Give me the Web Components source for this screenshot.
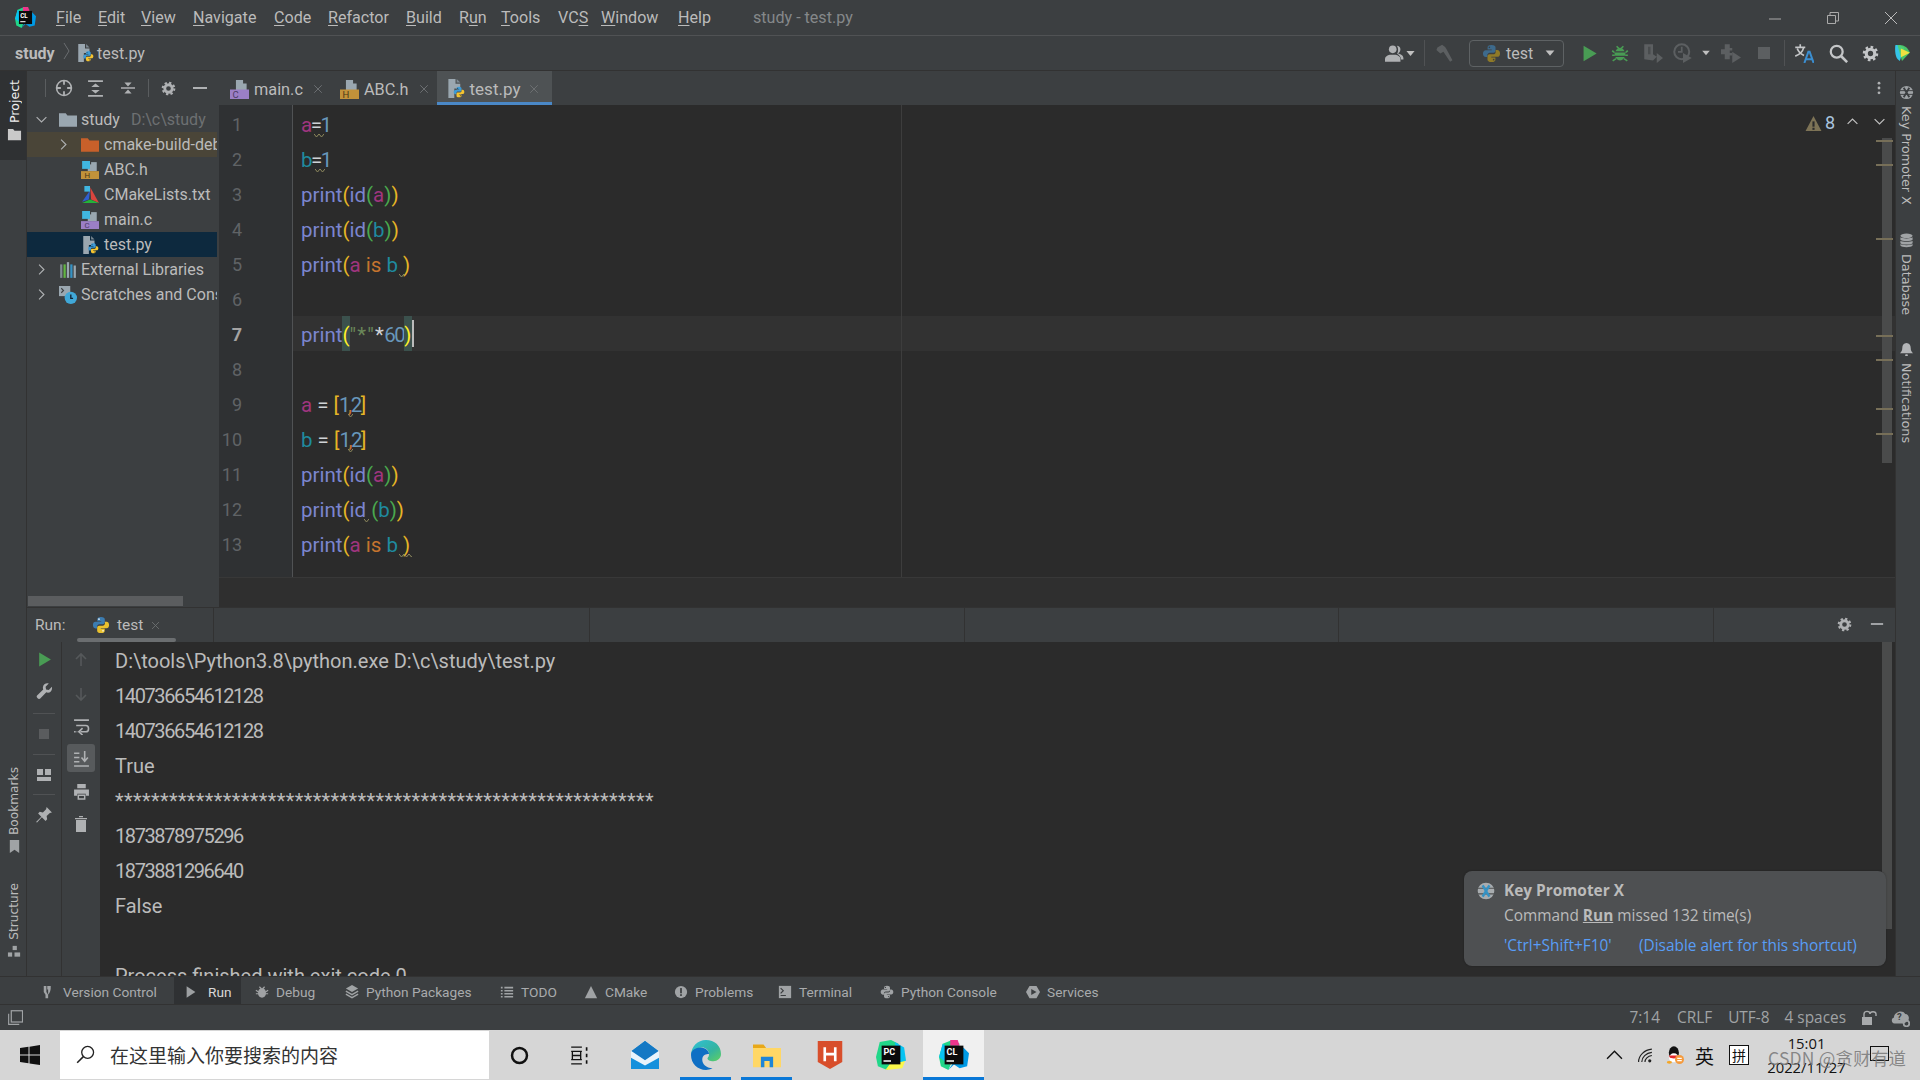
<!DOCTYPE html>
<html lang="zh-CN"><head><meta charset="utf-8"><title>study - test.py</title>
<style>
html,body{margin:0;padding:0;background:#3c3f41}
body{width:1920px;height:1080px;overflow:hidden;font-family:Roboto,"Noto Sans CJK SC",sans-serif;color:#bbb}
</style></head><body>
<ide-app></ide-app>
<script>
const PY=(b,y,e='#fff')=>`<path fill="${b}" d="M8 .8C5.4.8 4.7 1.8 4.7 3v1.6H8.2v.6H3.1C1.8 5.2.8 6.3.8 8.1s1 2.9 2.3 2.9h1.4V9.3c0-1.1.9-2 2-2h3.2c.9 0 1.7-.8 1.7-1.7V3C11.4 1.8 10.4.8 8 .8z"/><path fill="${y}" d="M8 15.2c2.6 0 3.3-1 3.3-2.2v-1.6H7.8v-.6h5.1c1.3 0 2.3-1.1 2.3-2.9s-1-2.9-2.3-2.9h-1.4v1.7c0 1.1-.9 2-2 2H6.3c-.9 0-1.7.8-1.7 1.7V13c0 1.2 1 2.2 3.4 2.2z"/><circle cx="6.2" cy="2.8" r=".7" fill="${e}"/><circle cx="9.8" cy="13.2" r=".7" fill="${e}"/>`;
const G='#afb1b3',D='#5c5f61';
const ICONS={
 python:PY('#3c7cb0','#e8c02e'),
 pydim:PY('#3d6a8c','#8f7a28','#3c3f41'),
 pyfile:`<path fill="#9aa7b0" d="M2 0h6v4h4v4H7v8H2z"/><path fill="#7d8a93" d="M9 0l3 3H9z"/><g transform="translate(6 6) scale(.62)">${PY('#3d9bd6','#f4c430','#222')}</g>`,
 cfile:`<path fill="#9aa7b0" d="M5 0h6v3h3v6H5z"/><rect x="0" y="8" width="16" height="8" fill="#9b7fc6"/><text x="2" y="15" font-size="8" font-family="Roboto" fill="#4b3b66">C</text>`,
 hfile:`<path fill="#9aa7b0" d="M5 0h6v3h3v6H5z"/><rect x="0" y="8" width="16" height="8" fill="#c2923a"/><text x="2" y="15" font-size="8" font-family="Roboto" fill="#4a3716">H</text>`,
 cfileb:`<path fill="#9aa7b0" d="M6 3h5v6H6z"/><path fill="#9aa7b0" d="M9 1h5v8H9z"/><rect x="1" y="0" width="7" height="7" fill="#40b6e0"/><rect x="0" y="9" width="16" height="7" fill="#9b7fc6"/><text x="3" y="15.4" font-size="7" font-family="Roboto" fill="#4b3b66">C</text>`,
 hfileb:`<path fill="#9aa7b0" d="M6 3h5v6H6z"/><path fill="#9aa7b0" d="M9 1h5v8H9z"/><rect x="1" y="0" width="7" height="7" fill="#40b6e0"/><rect x="0" y="9" width="16" height="7" fill="#c2923a"/><text x="3" y="15.4" font-size="7" font-family="Roboto" fill="#4a3716">H</text>`,
 folder:`<path fill="#9aa7b0" d="M0 2h6l1.5 2H16v10H0z"/>`,
 folderw:`<path fill="#c9c9c9" d="M1 2h5.5L8 4h7v10H1z"/>`,
 foldero:`<path fill="#c8602a" d="M0 2h6l1.5 2H16v10H0z"/>`,
 cmake:`<path fill="#2f5fd0" d="M8 4L1 14l6-2z"/><path fill="#d9453e" d="M8.2 1L16 15l-7-3z"/><path fill="#23b33a" d="M1 15h15l-8-3z"/><path fill="#40b6e0" d="M3 0h5v5H3z"/>`,
 libs:`<g fill="#7f8b91"><rect x="1" y="3" width="2" height="12"/></g><rect x="4" y="3" width="2" height="12" fill="#62b543"/><rect x="7" y="1" width="2" height="14" fill="#9aa7b0"/><rect x="10" y="3" width="2" height="12" fill="#3592c4"/><rect x="13" y="4" width="2" height="11" fill="#9aa7b0"/>`,
 scratch:`<path fill="#9aa7b0" d="M0 0h10v9H0z"/><path d="M2 2l2 2-2 2" fill="none" stroke="#3c3f41"/><circle cx="10.5" cy="10.5" r="5.5" fill="#40a8d8"/><path d="M10.5 7.5v3.5h2" fill="none" stroke="#123" stroke-width="1.2"/>`,
 locate:`<circle cx="8" cy="8" r="6.6" fill="none" stroke="${G}" stroke-width="1.4"/><path d="M8 1v4.2M8 10.8V15M1 8h4.2M10.8 8H15" stroke="${G}" stroke-width="1.6"/>`,
 expand:`<path d="M1 1h14M1 15h14" stroke="${G}" stroke-width="1.6"/><path fill="${G}" d="M8 3.4l4 3.2H4zM8 12.6L4 9.4h8z"/>`,
 collapse:`<path d="M1 8h14" stroke="${G}" stroke-width="1.5"/><path fill="${G}" d="M8 6.4L4.4 2.4h7.2zM8 9.6l3.6 4H4.4z"/>`,
 gear:`<circle cx="8" cy="8" r="4" fill="none" stroke="${G}" stroke-width="3"/><circle cx="8" cy="8" r="6.2" fill="none" stroke="${G}" stroke-width="2.2" stroke-dasharray="2.45 2.4"/>`,
 minus:`<rect x="1" y="7" width="14" height="2" fill="${G}"/>`,
 close:`<path d="M3 3l10 10M13 3L3 13" stroke="#6d7072" stroke-width="1.3"/>`,
 right:`<path d="M5 2l6 6-6 6" fill="none" stroke="${G}" stroke-width="1.4"/>`,
 down:`<path d="M2 5l6 6 6-6" fill="none" stroke="${G}" stroke-width="1.4"/>`,
 up:`<path d="M2 11l6-6 6 6" fill="none" stroke="#c0c0c0" stroke-width="1.5"/>`,
 downb:`<path d="M2 5l6 6 6-6" fill="none" stroke="#c0c0c0" stroke-width="1.5"/>`,
 dots:`<circle cx="8" cy="2.5" r="1.6" fill="${G}"/><circle cx="8" cy="8" r="1.6" fill="${G}"/><circle cx="8" cy="13.5" r="1.6" fill="${G}"/>`,
 warn:`<path fill="#7d7356" d="M8 1l7.5 14H.5z"/><rect x="7" y="6" width="2" height="5" fill="#2b2b2b"/><rect x="7" y="12" width="2" height="2" fill="#2b2b2b"/>`,
 person:`<circle cx="6.5" cy="4.5" r="3.2" fill="${G}"/><path fill="${G}" d="M0 15v-2.5c0-2 2-3 4-3.5h5c2 .5 4 1.5 4 3.5V15z"/><path fill="${G}" d="M10 1.5c1.6 0 3 1.2 3 3s-1 3-2 3.4c2 .5 4.5 1.4 4.5 4V13h-2c0-2-1.5-3.8-3.3-4.8C11.2 7 11.5 3.5 10 1.5z"/>`,
 hammer:`<path fill="${D}" d="M2 3l4-2.4 2.5 2 1 1.5 5.2 9.6-2 1.3-5.6-8.5L4.5 8 1.2 5z"/>`,
 play:`<path fill="#499c54" d="M3 1.5v13l11-6.5z"/>`,
 playw:`<path fill="#9da0a2" d="M3 1.5v13l10-6.5z"/>`,
 bug:`<ellipse cx="8" cy="9" rx="4.6" ry="5.6" fill="#499c54"/><path d="M5 2l2 2M11 2L9 4M1 6l3 2M15 6l-3 2M1 10h3M15 10h-3M1.5 15l3-2M14.5 15l-3-2" stroke="#499c54" stroke-width="1.5"/><path d="M3 7h10M3 11h10" stroke="#3c3f41" stroke-width="1"/>`,
 bugg:`<ellipse cx="8" cy="9" rx="4.6" ry="5.6" fill="#a0a2a4"/><path d="M5 2l2 2M11 2L9 4M1 6l3 2M15 6l-3 2M1 10h3M15 10h-3" stroke="#a0a2a4" stroke-width="1.4"/>`,
 cover:`<path fill="${D}" d="M1 1h7v8l3 2-3 3-7-1zM11 8v8l5-4z"/><path fill="#3c3f41" d="M4 3h2v6H4z" opacity=".6"/>`,
 profile:`<circle cx="7" cy="7" r="6" fill="none" stroke="${D}" stroke-width="1.6"/><path d="M7 3v4H4" stroke="${D}" fill="none" stroke-width="1.4"/><path fill="${D}" d="M8 8v8l7-4z"/>`,
 attach:`<path fill="${D}" d="M3 1h4v3h2v2H7v2h2v2H7v3H3v-4H0V5h3z"/><path fill="${D}" d="M9 7v9l7-4.5z"/>`,
 stop:`<rect x="2" y="2" width="12" height="12" fill="${D}"/>`,
 stopd:`<rect x="3" y="3" width="10" height="10" fill="#5a5c5e"/>`,
 caret:`<path fill="#c0c0c0" d="M3 5h10l-5 6z"/>`,
 translate:`<path d="M1 3.5h8M5 1v2.5M7.8 3.5C7 7 4 9.5 1 10.5M2.6 4.5C3.6 7 6 9 8 10" fill="none" stroke="#c4c6c8" stroke-width="1.3"/><path d="M8.3 16l3.2-9h1l3.2 9M9.6 13h5" fill="none" stroke="#3b8ed0" stroke-width="1.6"/>`,
 search:`<circle cx="6.5" cy="6.5" r="5" fill="none" stroke="#c4c6c8" stroke-width="1.9"/><path d="M10.3 10.3l5 5" stroke="#c4c6c8" stroke-width="2.2"/>`,
 gearl:`<circle cx="8" cy="8" r="4" fill="none" stroke="#c4c6c8" stroke-width="3"/><circle cx="8" cy="8" r="6.2" fill="none" stroke="#c4c6c8" stroke-width="2.2" stroke-dasharray="2.45 2.4"/>`,
 code:`<path fill="#35c4e8" d="M2 1c3-.6 6 .5 8 2.5L6 15C3 13 1.4 10 2 1z"/><path fill="#4dd06c" d="M4 1c5-1 9 1.5 11 6.6L8 15z" opacity=".9"/><path fill="#f0e040" d="M7 4l8 3.8-8 4z"/>`,
 keyx:`<circle cx="8" cy="8" r="7" fill="#9ea2a5"/><path d="M1 6h14M1 10h14" stroke="#3c3f41" stroke-width="1"/><path d="M5 3l6 10M11 3L5 13" stroke="#3c3f41" stroke-width="2"/>`,
 keyxb:`<circle cx="8" cy="8" r="7.4" fill="#a8acaf"/><path d="M0 5.5h16M0 10.5h16" stroke="#4e5052" stroke-width="1"/><path d="M5 3l6 10M11 3L5 13" stroke="#3592c4" stroke-width="2.2"/>`,
 db:`<g fill="#a0a3a5"><ellipse cx="8" cy="3" rx="6.5" ry="2.4"/><path d="M1.5 4.6c1 1.6 12 1.6 13 0v2.6c-1 1.8-12 1.8-13 0zM1.5 8.2c1 1.6 12 1.6 13 0v2.6c-1 1.8-12 1.8-13 0zM1.5 11.8c1 1.6 12 1.6 13 0V13.4c-1 2.4-12 2.4-13 0z"/></g>`,
 bell:`<path fill="#b3b5b7" d="M8 1c3 0 4.5 2.4 4.5 5.5 0 3 1 4 2.5 5.5H1c1.5-1.5 2.5-2.5 2.5-5.5C3.5 3.4 5 1 8 1z"/><rect x="6.5" y="13" width="3" height="2" rx="1" fill="#b3b5b7"/>`,
 book:`<path fill="#a0a3a5" d="M3 1h10v14l-5-3.5L3 15z"/>`,
 struct:`<rect x="6" y="2" width="4.5" height="4.5" fill="#a0a3a5"/><rect x="1" y="9" width="4.5" height="4.5" fill="#a0a3a5"/><rect x="8" y="9" width="6" height="4.5" fill="#a0a3a5"/>`,
 wrench:`<path fill="#afb1b3" d="M15 3.5l-3 3-2.5-.5L9 3.5l3-3C9.5-.2 6.8 1.2 6.5 4c-.1.7 0 1.4.3 2L1 11.8c-1.4 1.5 1.4 4.2 3 2.8l5.7-5.8c3 1.2 6-1.4 5.3-5.3z"/>`,
 arrowu:`<path d="M8 2v12M3 7l5-5 5 5" fill="none" stroke="#55585a" stroke-width="1.6"/>`,
 arrowd:`<path d="M8 2v12M3 9l5 5 5-5" fill="none" stroke="#55585a" stroke-width="1.6"/>`,
 wrap:`<path d="M1 2h14M3 7h9c3.5 0 3.5 6 0 6H7" fill="none" stroke="#afb1b3" stroke-width="1.5"/><path d="M9 9.5L5.5 13 9 16" fill="none" stroke="#afb1b3" stroke-width="1.5"/><path d="M1 13h3" stroke="#afb1b3" stroke-width="1.5" stroke-dasharray="1.5 1"/>`,
 scroll:`<path d="M1 15h14M1 3h5M1 7h5M1 11h5" stroke="#afb1b3" stroke-width="1.5"/><path d="M11 1v9M8 7l3 3.5L14 7" fill="none" stroke="#afb1b3" stroke-width="1.5"/>`,
 print:`<path fill="#afb1b3" d="M4 1h8v4H4zM1 6h14v6h-3v-2H4v2H1z"/><path d="M5 11.5h6V15H5z" fill="none" stroke="#afb1b3" stroke-width="1.4"/>`,
 trash:`<path fill="#afb1b3" d="M3 4h10v12H3zM2 2h12v1.3H2zM6 0h4v1.3H6z"/>`,
 layout:`<path fill="#afb1b3" d="M1 2h6v6H1zM9 2h6v6H9zM1 10h14v4H1z"/>`,
 pin:`<path fill="#afb1b3" d="M10 1l5 5-2 .5-3 3 .5 3L9 14 5.5 10.5 1 15.5 0 15l5-5L2 7l1.5-1.5 3 .5 3-3z"/>`,
 vcs:`<path fill="#a0a3a5" d="M2 1h3v7l2 3V5H6V1h4c.3 5-1 8-3 10v4H4v-4L2 8z"/>`,
 pack:`<path fill="#a0a3a5" d="M8 0l7 4-7 4-7-4z"/><path d="M1 7l7 4 7-4M1 10.5l7 4 7-4" fill="none" stroke="#a0a3a5" stroke-width="1.6"/>`,
 list:`<path d="M1 3h2M5 3h10M1 6.5h2M5 6.5h10M1 10h2M5 10h10M1 13.5h2M5 13.5h10" stroke="#a0a3a5" stroke-width="1.8"/>`,
 tri:`<path fill="#a0a3a5" d="M8 1l7 14H1z"/>`,
 prob:`<circle cx="8" cy="8" r="7" fill="#a0a3a5"/><rect x="7" y="3.5" width="2" height="6" fill="#3c3f41"/><rect x="7" y="10.5" width="2" height="2" fill="#3c3f41"/>`,
 term:`<rect x="1" y="1" width="14" height="14" fill="#a0a3a5"/><path d="M3 3.5l3 3-3 3" fill="none" stroke="#3c3f41" stroke-width="1.4"/><path d="M3 12h6" stroke="#3c3f41" stroke-width="1.2"/>`,
 pycon:PY('#a0a3a5','#a0a3a5','#3c3f41'),
 serv:`<path fill="#a0a3a5" d="M4 1h8l4 7-4 7H4L0 8z"/><path fill="#3c3f41" d="M6 4.5v7l6-3.5z"/>`,
 panel:`<path d="M.7 4v11.3H12" fill="none" stroke="#a0a3a5" stroke-width="1.2"/><rect x="3.5" y=".8" width="12" height="12" fill="none" stroke="#a0a3a5" stroke-width="1.3"/>`,
 lock:`<rect x="1" y="7" width="10" height="8" fill="#a8aaac"/><path d="M3 7V4c0-3.5 6-3.5 6 0M9 4c0-3 6-3 6 0v2" fill="none" stroke="#a8aaac" stroke-width="1.4"/>`,
 cloud:`<path fill="#a0a3a5" d="M3 13C0 13 0 8.5 2.5 8 2.5 3 10 1 12 5c3 0 4 4 2 6l-3 2z"/><text x="5" y="10" font-size="8" font-weight="700" font-family="Roboto" fill="#3c3f41">?</text><circle cx="13" cy="13" r="2.4" fill="none" stroke="#a0a3a5" stroke-width="1.5"/>`,
 win:`<path fill="#111" d="M0 2.4l6.8-1v6.2H0zM7.6 1.3L16 0v7.6H7.6zM0 8.4h6.8v6.2L0 13.6zM7.6 8.4H16V16l-8.4-1.3z"/>`,
 mag:`<circle cx="9.8" cy="6.2" r="5" fill="none" stroke="#222" stroke-width="1.1"/><path d="M6.2 9.8L1 15" stroke="#222" stroke-width="1.3"/>`,
 cortana:`<circle cx="8" cy="8" r="6.3" fill="none" stroke="#111" stroke-width="2.1"/>`,
 task:`<path d="M1 1h9M1 4.5h9M1 11.5h9M1 15h9M2 4.5V8h7V4.5M2 11.5V8h7v3.5" fill="none" stroke="#111" stroke-width="1.1"/><path d="M14 1v3M14 6.5v3M14 12v3" stroke="#111" stroke-width="1.4"/>`,
 mail:`<path fill="#1590dc" d="M8 0l8 6v10H0V6z"/><path fill="#1478c4" d="M8 0l8 6-8 5-8-5z"/><path fill="#e9f3fb" d="M0 5.5L8 11l8-5.5v4L8 14 0 9.5z"/>`,
 edge:`<defs><linearGradient id="eg" x1="0" y1="0" x2="1" y2="1"><stop offset="0" stop-color="#30c0d8"/><stop offset=".6" stop-color="#34b4a0"/><stop offset="1" stop-color="#60d060"/></linearGradient></defs><path fill="url(#eg)" d="M8 0c4.5 0 8 3 8 7.5 0 2.5-2 3.8-4 3.8-2 0-3.2-.8-3.2-1.5 0-.5.8-.6.8-2.2C9.6 5 7.5 3.8 5.5 4 3 4.3 1 6 0 8 .2 3.5 3.5 0 8 0z"/><path fill="#0f6fc4" d="M0 8c0-2.5 2.5-4 5-4 3 0 4.6 2 4.6 3.5-1.600 0-3.600.5-3.600 3 0 2.300 2 4.300 5.500 4.600C10.300 15.800 9 16 8 16c-4.500 0-8-3.500-8-8z"/>`,
 winf:`<path fill="#e8a818" d="M0 2h6l1.5 2H0z"/><path fill="#ffd766" d="M0 4h16v11H0z"/><path fill="#1e86d8" d="M4.5 15V9h7v6h-2v-3.600h-3V15z"/>`,
 hb:`<path fill="#d84e2b" d="M1 0h14v12l-7 4-7-4z"/><path d="M5 3.5v8M11 3.5v8M5 7.5h6" stroke="#fff" stroke-width="1.5"/>`,
 pc:`<path fill="#21d789" d="M0 9L2 1l6-1 4 2-6 14-5-2z"/><path fill="#fcf84a" d="M5 16l3-4 8-2-2 5z"/><path fill="#07c3f2" d="M10 1l5 3 1 7-4 1z"/><rect x="3" y="3" width="10" height="10" fill="#0b0b0b"/><text x="4" y="8.2" font-size="4.8" font-weight="700" font-family="Roboto" fill="#fff">PC</text><rect x="4" y="10.8" width="4" height=".8" fill="#fff"/>`,
 cl:`<path fill="#21d789" d="M0 9L2 2l5-2 4 2-6 14-4-2z"/><path fill="#009ae5" d="M5 16l3-3 3 2 4-1 1-7-3-3z"/><path fill="#07c3f2" d="M0 9l2-7 3 2-1 8z"/><path fill="#ed358c" d="M6 0h4l1 3H6z"/><rect x="3" y="3" width="10" height="10" fill="#0b0b0b"/><text x="4" y="8.2" font-size="4.8" font-weight="700" font-family="Roboto" fill="#fff">CL</text><rect x="4" y="10.8" width="4" height=".8" fill="#fff"/>`,
 chevtray:`<path d="M1 11l7-7 7 7" fill="none" stroke="#111" stroke-width="1.3"/>`,
 wifi:`<path d="M1.5 14C1.5 8 7 2.5 14 2M4.5 14c0-4 4-8.5 9.5-9M7.5 14c0-2.5 2.5-5.5 6.5-6" fill="none" stroke="#222" stroke-width="1.1"/><circle cx="12" cy="13" r="1.5" fill="#222"/>`,
 qq:`<ellipse cx="7" cy="6" rx="4.5" ry="5.8" fill="#111"/><ellipse cx="7" cy="10.5" rx="4.3" ry="4" fill="#fff"/><path d="M2.5 8.5h9l-1 2-3.5.6-3.5-.6z" fill="#e3282b"/><ellipse cx="3" cy="14.5" rx="2.3" ry="1.2" fill="#f5a623"/><circle cx="12" cy="12" r="4" fill="#f59a3c"/><path d="M10 11h4M10 13h4" stroke="#fff" stroke-width=".9"/>`
};
class IdeIcon extends HTMLElement{
 connectedCallback(){
  const s=this.getAttribute('size')||16,h=this.getAttribute('h')||s;
  this.attachShadow({mode:'open'}).innerHTML=`<style>:host{display:inline-flex;flex:none;width:${s}px;height:${h}px}svg{display:block}</style><svg width="${s}" height="${h}" viewBox="0 0 16 16" preserveAspectRatio="none">${ICONS[this.getAttribute('name')]||''}</svg>`;
 }
}
customElements.define('ide-icon',IdeIcon);
const def=(name,css,html)=>customElements.define(name,class extends HTMLElement{
 connectedCallback(){ if(this.shadowRoot) return; this.attachShadow({mode:'open'}).innerHTML=`<style>${css}</style>`+(typeof html==='function'?html(this):html); }
});
const ic=(n,s=16,h)=>`<ide-icon name="${n}" size="${s}"${h?` h="${h}"`:''}></ide-icon>`;
const cell=(w,inner,m=0)=>`<span class="c" style="width:${w}px;margin-left:${m}px">${inner}</span>`;

def('ide-menu',`:host{display:grid;height:36px;box-sizing:border-box;border-bottom:1px solid #505254;background:#3c3f41;grid-template-columns:56px 42px 43px 52px 81px 54px 78px 53px 42px 57px 43px 77px 75px 1fr 59px 59px 58px;align-items:center;font:16.1px Roboto,sans-serif;color:#bbb}
 .logo{padding-left:15px;display:flex}u{text-underline-offset:2px}.t{color:#85888a}.w{display:flex;justify-content:center}`,
 `<span class="logo">${ic('cl',21)}</span><span><u>F</u>ile</span><span><u>E</u>dit</span><span><u>V</u>iew</span><span><u>N</u>avigate</span><span><u>C</u>ode</span><span><u>R</u>efactor</span><span><u>B</u>uild</span><span>R<u>u</u>n</span><span><u>T</u>ools</span><span>VC<u>S</u></span><span><u>W</u>indow</span><span><u>H</u>elp</span><span class="t">study - test.py</span>
 <span class="w" style="padding-left:3px"><svg width="14" height="14"><path d="M1 8h12" stroke="#aaa"/></svg></span><span class="w"><svg width="14" height="14"><path d="M1.5 4.5h8v8h-8zM4 4V1.5h8.5V10H10" fill="none" stroke="#aaa"/></svg></span><span class="w"><svg width="14" height="14"><path d="M1 1l12 12M13 1L1 13" stroke="#bbb"/></svg></span>`);

def('ide-nav',`:host{display:flex;align-items:center;height:35px;border-bottom:1px solid #323232;background:#3c3f41;font:16px Roboto,sans-serif;box-sizing:border-box;padding-left:15px}
 b{color:#bbb;font-weight:700;width:48px}.cr{width:13px}.p{margin:0 3px 0 0;display:flex}.sp{flex:1}
 .cfg{display:flex;align-items:center;width:95px;height:27px;box-sizing:border-box;border:1px solid #5e6264;border-radius:4px;padding-left:12px;margin-left:6px;flex:none}
 .cfg span{margin:0 9px 0 5px;width:28px}.s{width:1px;height:26px;background:#505254;flex:none}
 .c{display:flex;align-items:center;justify-content:center;flex:none}`,
 `<b>study</b><span class="cr"><svg width="8" height="18"><path d="M1 1l5 8-5 8" fill="none" stroke="#6a6d70"/></svg></span><span class="p">${ic('pyfile',18)}</span><span>test.py</span><span class="sp"></span>
 ${cell(46,ic('person',19)+ic('caret',13))}<span class="s"></span>${cell(38,ic('hammer',19))}
 <span class="cfg">${ic('pydim',19)}<span>test</span>${ic('caret',14)}</span>
 ${cell(30,ic('play',19),10)}${cell(30,ic('bug',18),1)}${cell(30,ic('cover',20),3)}${cell(30,ic('profile',20))}${cell(16,ic('caret',12))}${cell(30,ic('attach',20),2)}${cell(30,ic('stop',16),3)}
 <span class="s" style="margin:0 4px 0 5px"></span>${cell(30,ic('translate',20))}${cell(30,ic('search',19),4)}${cell(30,ic('gearl',17),2)}${cell(30,ic('code',18),2)}<span style="width:3px"></span>`);

def('side-btn',`:host{display:flex;flex-direction:column;align-items:center;font:12.2px "DejaVu Sans",sans-serif;color:#bbb;gap:var(--sg,4px)}
 .t{writing-mode:vertical-rl}:host([flip]){flex-direction:column-reverse}:host([flip]) .t{transform:rotate(180deg)}`,
 el=>`${ic(el.getAttribute('icon'),15)}<span class="t"><slot></slot></span>`);
def('ide-stripe',`:host{display:flex;flex-direction:column;flex:none;box-sizing:border-box;background:#3c3f41}`,`<slot></slot>`);

def('tree-row',`:host{display:flex;align-items:center;height:25px;font:16px Roboto,sans-serif;color:#bbb;white-space:nowrap;overflow:hidden;width:190px;box-sizing:border-box}
 :host([sel]){background:#0d293e}:host([warm]){background:#4a4538}
 .c{width:16px;display:flex;flex:none}.d{color:#6d7072;margin-left:11px}`,
 el=>{const d=+el.getAttribute('depth')||0,ch=el.getAttribute('chev');
  return `<span class="c" style="margin-left:${d?30:8}px">${ch?ic(ch,13):''}</span><span style="margin:0 ${d?5:4}px 0 8px;display:flex">${ic(el.getAttribute('icon'),18)}</span><span><slot></slot></span>${el.hasAttribute('hint')?`<span class="d">${el.getAttribute('hint')}</span>`:''}`});

def('project-panel',`:host{display:flex;flex-direction:column;width:192px;flex:none;height:100%;position:relative;background:#3c3f41}
 .h{height:34px;flex:none;display:flex;align-items:center;padding-left:18px}.s{width:1px;height:18px;background:#5a5d5f}
 .b{flex:1;width:190px;overflow:hidden;padding-top:2px}.sb{height:10px;width:155px;margin:0 0 1px 1px;background:#5b5d5f;flex:none}`,
 `<div class="h"><span class="s"></span><span style="margin-left:9px;display:flex">${ic('locate',18)}</span><span style="margin-left:14px;display:flex">${ic('expand',17)}</span><span style="margin-left:16px;display:flex">${ic('collapse',16)}</span><span class="s" style="margin:0 12px"></span>${ic('gear',15)}<span style="margin-left:16px;display:flex">${ic('minus',16)}</span></div>
 <div class="b"><tree-row chev="down" icon="folder" hint="D:\\c\\study">study</tree-row><tree-row depth="1" chev="right" icon="foldero" warm>cmake-build-debug</tree-row><tree-row depth="1" icon="hfileb">ABC.h</tree-row><tree-row depth="1" icon="cmake">CMakeLists.txt</tree-row><tree-row depth="1" icon="cfileb">main.c</tree-row><tree-row depth="1" icon="pyfile" sel>test.py</tree-row><tree-row chev="right" icon="libs">External Libraries</tree-row><tree-row chev="right" icon="scratch">Scratches and Consoles</tree-row></div><div class="sb"></div>`);

def('editor-tab',`:host{display:flex;align-items:center;height:34px;box-sizing:border-box;font:16.3px Roboto,sans-serif;color:#bbb;padding:2px 0 0 11px;flex:none}
 :host([active]){background:#4e5254;border-bottom:3px solid #4a88c7;padding:4px 0 0 9px;width:115px}
 .t{margin:0 9px 0 5px}:host([active]) .t{margin-right:8px;font-size:17px}`,el=>`${ic(el.getAttribute('icon'),19)}<span class="t"><slot></slot></span>${ic('close',12)}`);
def('editor-tabs',`:host{display:flex;flex:none;height:34px;background:#3c3f41;align-items:stretch;position:relative}.m{margin-left:auto;width:23px;display:flex;align-items:center}`,
 `<slot></slot><span class="m">${ic('dots',14)}</span>`);

const Q=(x)=>`<span style="letter-spacing:-1.5px">${x}</span>`;
const LIST=`<i class="y">[</i><i class="n" style="letter-spacing:-2.5px">1</i><i class="k" style="letter-spacing:-1.5px">,</i><w-mark left="-3" w="5"></w-mark><i class="n">2</i><i class="y">]</i>`;
const L=[
 Q(`<i class="a">a</i><i class="o">=</i>`)+`<i class="n">1</i><w-mark left="-16" w="10"></w-mark>`,
 Q(`<i class="b">b</i><i class="o">=</i>`)+`<i class="n">1</i><w-mark left="-16" w="10"></w-mark>`,
 `<i class="f">print</i><i class="y">(</i><i class="f">id</i><i class="g">(</i><i class="a">a</i><i class="g">)</i><i class="y">)</i>`,
 `<i class="f">print</i><i class="y">(</i><i class="f">id</i><i class="g">(</i><i class="b">b</i><i class="g">)</i><i class="y">)</i>`,
 `<i class="f">print</i><i class="y">(</i><i class="a">a</i> <i class="k">is</i> <i class="b">b</i>&nbsp;<w-mark left="-4" w="6"></w-mark><i class="y">)</i>`,
 ``,
 `<i class="f">print</i><i class="m">(</i><i class="s">"*"</i><i class="o st">*</i><i class="n">60</i><i class="m">)</i><i class="cur"></i>`,
 ``,
 `<i class="a">a</i> <i class="o">=</i> `+LIST,
 `<i class="b">b</i> <i class="o">=</i> `+LIST,
 `<i class="f">print</i><i class="y">(</i><i class="f">id</i><i class="g">(</i><i class="a">a</i><i class="g">)</i><i class="y">)</i>`,
 `<i class="f">print</i><i class="y">(</i><i class="f">id</i>&nbsp;<w-mark left="-7" w="5"></w-mark><i class="g">(</i><i class="b">b</i><i class="g">)</i><i class="y">)</i>`,
 `<i class="f">print</i><i class="y">(</i><i class="a">a</i> <i class="k">is</i> <i class="b">b</i>&nbsp;<w-mark left="-4" w="13"></w-mark><i class="y">)</i>`
];
def('w-mark',`:host{display:inline-block;width:0;height:0;position:relative}svg{position:absolute;top:1px}`,
 el=>{const w=+el.getAttribute('w'),l=el.getAttribute('left');let d='M0 1';for(let x=0;x<w;x+=5)d+=`l2.5 3l2.5 -3`;return `<svg style="left:${l}px" width="${w}" height="6"><path d="${d}" fill="none" stroke="#8f8a5e"/></svg>`});
def('code-editor',`:host{display:flex;flex:1;position:relative;background:#2b2b2b;overflow:hidden;font:20.5px/35px Roboto,sans-serif}
 .gut{width:74px;flex:none;background:#2f3133;border-right:1px solid #505254;box-sizing:border-box;text-align:right;padding:1px 50px 0 0;color:#606366;font-size:18px;line-height:38px}.gut b{color:#a4a3a3}.gut div{height:35px}
 .code{flex:1;padding-top:1px;position:relative}.l{height:35px;line-height:38px;padding-left:8px;white-space:pre;color:#bbb}.l.cur{background:#323232}
 i{font-style:normal}.a{color:#a0357f}.b{color:#1f8a9f}.f{color:#7b85cf}.y{color:#e5b526}.g{color:#4aa94e}.o{color:#cfd3d6}.n{color:#6897bb;letter-spacing:-1.5px}.k{color:#c5742e}.s{color:#6a8759;letter-spacing:1.2px}.st{letter-spacing:.4px}
 .m{color:#ffef28;background:#3b514d;display:inline-block;height:35px;line-height:38px;vertical-align:top}i.cur{display:inline-block;width:2px;height:27px;background:#bbb;vertical-align:top;margin-top:4px}
 .rm{position:absolute;left:608px;top:0;bottom:0;width:1px;background:#3d3d3d}
 .band{position:absolute;left:0;right:0;bottom:0;height:29px;background:#2f2f2f;border-top:1px solid #383838}
 .warn{position:absolute;right:60px;top:9px;display:flex;align-items:center;gap:3px;color:#a9c4df;font-size:18px;line-height:18px}
 .nv{position:absolute;top:10px;display:flex}
 .sb{position:absolute;left:1663px;top:33px;width:10px;height:325px;background:#4a4b4b}
 .mk{position:absolute;left:1657px;width:17px;height:2px;background:#776f58}`,
 ()=>`<div class="gut">${L.map((_,i)=>`<div>${i==6?`<b>7</b>`:i+1}</div>`).join('')}</div><div class="code"><span class="rm"></span>${L.map((x,i)=>`<div class="l${i==6?' cur':''}">${x||' '}</div>`).join('')}</div><div class="band"></div>
 <div class="warn">${ic('warn',17)}<span>8</span></div><span class="nv" style="left:1627px">${ic('up',13)}</span><span class="nv" style="left:1654px">${ic('downb',13)}</span>
 <div class="sb"></div>${[35,59,133,230,254,303,328].map(y=>`<span class="mk" style="top:${y}px"></span>`).join('')}`);

def('run-panel',`:host{display:flex;flex-direction:column;flex:1;min-height:0;border-top:1px solid #323232;background:#3c3f41;overflow:hidden}
 .h{height:34px;flex:none;display:flex;align-items:center;font:15.5px Roboto,sans-serif;position:relative}
 .lbl{margin-left:8px;width:42px}.tb{display:flex;align-items:center;width:99px;height:100%;box-sizing:border-box;padding-left:15px;position:relative}
 .tb span{margin:0 7px 0 7px}.tb::after{content:"";position:absolute;left:0;right:0;bottom:0;height:4px;border-radius:2px;background:#6b6e70}
 .sep{position:absolute;top:0;bottom:0;width:1px;background:#323232}
 .act{position:absolute;display:flex;top:9px}
 .r{flex:1;display:flex;min-height:0}.c1,.c2{flex:none;display:flex;flex-direction:column;align-items:center;box-sizing:border-box;border-right:1px solid #323232}.c1{width:35px}.c2{width:38px;border:0}
 .hr{width:22px;height:1px;background:#505254}
 .sel{background:#575a5c;border-radius:3px;width:28px;height:28px;display:flex;align-items:center;justify-content:center}
 .con{flex:1;background:#2b2b2b;position:relative;overflow:hidden;font:20px/35px Roboto,sans-serif;color:#bbb;padding:2px 0 0 15px;white-space:pre}
 .con div{height:35px}.d{letter-spacing:-1.4px}.st{letter-spacing:.37px}
 .sb{position:absolute;right:3px;top:0;width:10px;height:287px;background:#4a4b4b}`,
 `<div class="h"><span class="lbl">Run:</span><span class="tb">${ic('python',18)}<span>test</span>${ic('close',11)}</span>
  <span class="sep" style="left:186px"></span><span class="sep" style="left:562px"></span><span class="sep" style="left:937px"></span><span class="sep" style="left:1311px"></span><span class="sep" style="left:1686px"></span>
  <span class="act" style="left:1810px">${ic('gear',15)}</span><span class="act" style="left:1843px">${ic('minus',14)}</span></div>
 <div class="r"><div class="c1"><span style="margin-top:9px;display:flex">${ic('play',17)}</span><span style="margin-top:15px;display:flex">${ic('wrench',17)}</span><span class="hr" style="margin-top:13px"></span><span style="margin-top:12px;display:flex">${ic('stopd',16)}</span><span class="hr" style="margin-top:12px"></span><span style="margin-top:12px;display:flex">${ic('layout',16)}</span><span class="hr" style="margin-top:11px"></span><span style="margin-top:11px;display:flex">${ic('pin',17)}</span></div>
 <div class="c2"><span style="margin-top:10px;display:flex">${ic('arrowu',16)}</span><span style="margin-top:18px;display:flex">${ic('arrowd',16)}</span><span style="margin-top:16px;display:flex">${ic('wrap',17)}</span><span class="sel" style="margin-top:9px">${ic('scroll',17)}</span><span style="margin-top:11px;display:flex">${ic('print',17)}</span><span style="margin-top:16px;display:flex">${ic('trash',16)}</span></div>
 <div class="con"><div>D:\\tools\\Python3.8\\python.exe D:\\c\\study\\test.py</div><div class="d">140736654612128</div><div class="d">140736654612128</div><div>True</div><div class="st">${'*'.repeat(60)}</div><div class="d">1873878975296</div><div class="d">1873881296640</div><div>False</div><div> </div><div>Process finished with exit code 0</div><span class="sb"></span></div></div>`);

def('tool-btn',`:host{display:flex;align-items:center;height:27px;font:13.7px Roboto,sans-serif;color:#a9abad;box-sizing:border-box;padding:2px 0 0 var(--p,8px);gap:var(--g,7px);white-space:nowrap}:host([active]){background:#2f3133;color:#d8d8d8;width:67px}`,
 el=>`${ic(el.getAttribute('icon'),14)}<slot></slot>`);
def('tool-bar',`:host{display:grid;height:28px;background:#3c3f41;border-top:1px solid #323232;box-sizing:border-box;padding-left:34px;align-items:center;grid-template-columns:140px 73px 90px 155px 84px 90px 104px 102px 146px 1fr}`,`<slot></slot>`);

def('status-bar',`:host{display:flex;height:26px;box-sizing:border-box;border-top:1px solid #323232;background:#3c3f41;align-items:center;font:15.4px "Open Sans",sans-serif;color:#a0a3a5;padding-left:8px}
 .sp{flex:1}span{white-space:nowrap}`,
 `<span style="display:flex">${ic('panel',15)}</span><span class="sp"></span><span style="margin-right:17px">7:14</span><span style="margin-right:16px">CRLF</span><span style="margin-right:15px">UTF-8</span><span style="margin-right:15px">4 spaces</span><span style="margin-right:14px;display:flex">${ic('lock',16)}</span><span style="margin-right:10px;display:flex">${ic('cloud',19)}</span>`);

def('task-app',`:host{display:flex;align-items:center;justify-content:center;height:50px;box-sizing:border-box;width:var(--w,51px);border-bottom:3px solid transparent;flex:none;margin-left:var(--m,0);padding-top:2px}
 :host([run]){border-bottom-color:#0a78d7}:host([cur]){background:#f0f0f0}`,
 el=>`<slot></slot>`);
def('win-taskbar',`:host{display:flex;height:50px;align-items:stretch;background:#d6d6d6;position:relative;font:19px "Noto Sans CJK SC",sans-serif;color:#111}
 .st{width:60px;display:flex;align-items:center;justify-content:center}.q{width:429px;background:#fff;display:flex;align-items:center;margin:1px 0;box-sizing:border-box;padding-left:16px;padding-bottom:2px;color:#333;font-size:19px}
 .q span{margin-left:15px}.ab{display:flex;align-items:center;justify-content:center;flex:none}
 .tray{margin-left:auto;display:flex;align-items:center;padding-right:31px}.clk{width:105px;text-align:center;font:14.8px/24px "Open Sans",sans-serif;color:#111;margin:0 11px 0 5px}
 .py{display:inline-flex;align-items:center;justify-content:center;width:18px;height:18px;border:1px solid #111;background:#fff;font-size:14px;line-height:1;margin-left:15px}
 .box{width:19px;height:15px;border:1.5px solid #111;box-sizing:border-box;margin-top:-4px}
 .wm{position:absolute;left:1768px;top:16px;color:rgba(120,120,120,.85);font:17.5px/1.4 "Noto Sans CJK SC",sans-serif;white-space:nowrap;letter-spacing:.2px}`,
 `<span class="st">${ic('win',20)}</span><div class="q">${ic('mag',19)}<span>在这里输入你要搜索的内容</span></div>
 <span class="ab" style="width:60px">${ic('cortana',19)}</span><span class="ab" style="width:60px">${ic('task',19)}</span>
 <task-app style="--m:10px">${ic('mail',28)}</task-app><task-app run style="--m:10px">${ic('edge',30)}</task-app><task-app run style="--m:10px">${ic('winf',28)}</task-app><task-app style="--m:12px">${ic('hb',28)}</task-app><task-app style="--m:10px">${ic('pc',30)}</task-app><task-app run cur style="--m:7px;--w:61px">${ic('cl',30)}</task-app>
 <div class="tray">${ic('chevtray',17)}<span style="margin-left:14px;display:flex">${ic('wifi',17)}</span><span style="margin-left:12px;display:flex">${ic('qq',18)}</span><span style="margin-left:11px;font-size:19px">英</span><span class="py">拼</span><div class="clk">15:01<br>2022/11/27</div><span class="box"></span></div><span class="wm">CSDN @贪财有道</span>`);

def('key-note',`:host{position:absolute;left:1464px;top:871px;width:422px;height:95px;box-sizing:border-box;background:#4e5052;border-radius:8px;font:15.4px "Open Sans",sans-serif;color:#bbb;padding:8px 0 0 40px;box-shadow:0 0 2px rgba(0,0,0,.3);white-space:nowrap}
 .ic{position:absolute;left:13px;top:11px;display:flex}.t{font-weight:700;line-height:24px}.m{line-height:26px}u{font-weight:700}
 .l{color:#589df6;line-height:24px;margin-top:5px;display:grid;grid-template-columns:135px auto}`,
 `<span class="ic">${ic('keyxb',18)}</span><div class="t">Key Promoter X</div><div class="m">Command <u>Run</u> missed 132 time(s)</div><div class="l"><span>'Ctrl+Shift+F10'</span><span>(Disable alert for this shortcut)</span></div>`);

def('ide-app',`:host{display:flex;flex-direction:column;width:1920px;height:1080px;position:relative;overflow:hidden}
 .main{height:905px;display:flex;flex:none}.mid{flex:1;display:flex;flex-direction:column;min-width:0}
 .up{height:536px;display:flex;flex:none}.ed{flex:1;display:flex;flex-direction:column;min-width:0}
 .ls{width:27px;border-right:1px solid #323232;box-sizing:border-box;padding-left:2px}.rs{width:25px;border-left:1px solid #323232;box-sizing:border-box;padding-right:3px;--sg:6px}
 .rs side-btn{font-size:12.8px}
 .sel{background:#2f3133;height:89px;padding-top:9px;margin-left:-2px;padding-left:2px;box-sizing:border-box;color:#fff}`,
 `<ide-menu></ide-menu><ide-nav></ide-nav>
 <div class="main">
  <ide-stripe class="ls"><div class="sel"><side-btn flip icon="folderw" style="color:#eee;font-size:12.6px">Project</side-btn></div><side-btn flip icon="book" style="margin-top:607px">Bookmarks</side-btn><side-btn flip icon="struct" style="margin-top:29px">Structure</side-btn></ide-stripe>
  <div class="mid"><div class="up"><project-panel></project-panel><div class="ed"><editor-tabs><editor-tab icon="cfile">main.c</editor-tab><editor-tab icon="hfile" style="padding-left:16px">ABC.h</editor-tab><editor-tab active icon="pyfile" style="margin-left:7px">test.py</editor-tab></editor-tabs><code-editor></code-editor></div></div><run-panel></run-panel></div>
  <ide-stripe class="rs"><side-btn icon="keyx" style="margin-top:14px">Key Promoter X</side-btn><side-btn icon="db" style="margin-top:28px">Database</side-btn><side-btn icon="bell" style="margin-top:27px">Notifications</side-btn></ide-stripe>
 </div>
 <tool-bar><tool-btn icon="vcs">Version Control</tool-btn><tool-btn active icon="playw" style="--p:10px;--g:10px">Run</tool-btn><tool-btn icon="bugg">Debug</tool-btn><tool-btn icon="pack">Python Packages</tool-btn><tool-btn icon="list">TODO</tool-btn><tool-btn icon="tri">CMake</tool-btn><tool-btn icon="prob">Problems</tool-btn><tool-btn icon="term">Terminal</tool-btn><tool-btn icon="pycon">Python Console</tool-btn><tool-btn icon="serv">Services</tool-btn></tool-bar>
 <status-bar></status-bar><win-taskbar></win-taskbar><key-note></key-note>`);
</script>
</body></html>
